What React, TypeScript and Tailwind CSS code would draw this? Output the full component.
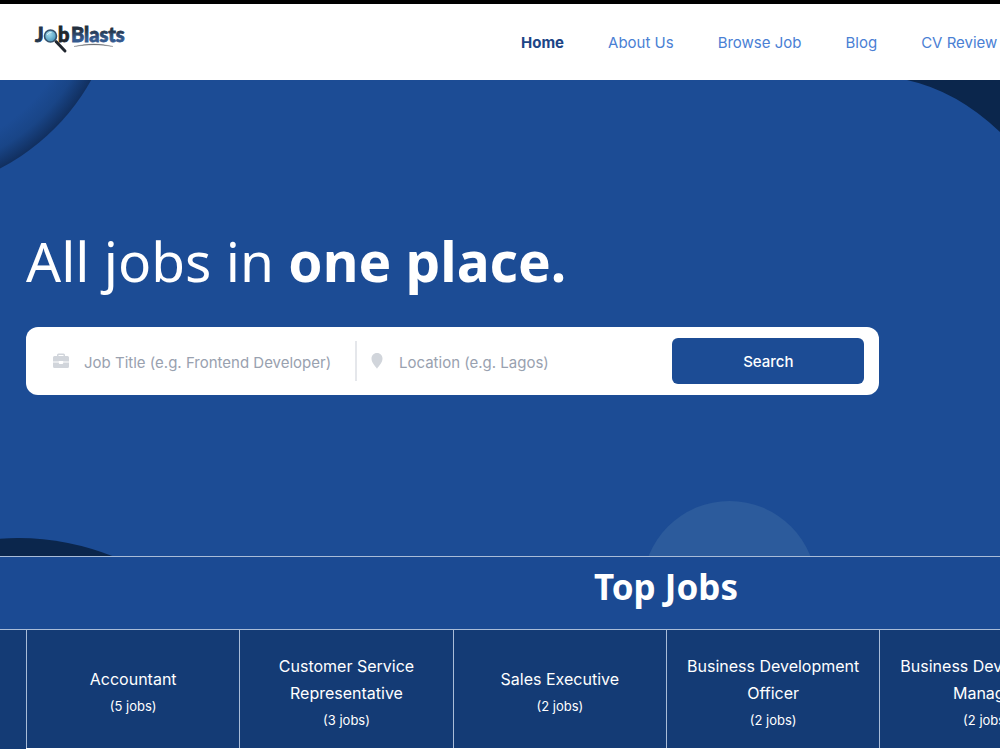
import { useState } from "react";

type NavLink = { label: string; href: string; active?: boolean };

type JobCategory = { title: string; count: number };

const navLinks: NavLink[] = [
  { label: "Home", href: "#home", active: true },
  { label: "About Us", href: "#about" },
  { label: "Browse Job", href: "#jobs" },
  { label: "Blog", href: "#blog" },
  { label: "CV Review", href: "#cv-review" },
];

const topJobs: JobCategory[] = [
  { title: "Accountant", count: 5 },
  { title: "Customer Service Representative", count: 3 },
  { title: "Sales Executive", count: 2 },
  { title: "Business Development Officer", count: 2 },
  { title: "Business Development Manager", count: 2 },
];

function Logo() {
  return (
    <svg width="96" height="44" viewBox="0 -4 96 44" role="img" aria-label="JobBlasts">
      <defs>
        <linearGradient id="letters" x1="0" y1="0" x2="0" y2="1">
          <stop offset="0.3" stopColor="#24303f" />
          <stop offset="0.7" stopColor="#34598e" />
        </linearGradient>
        <radialGradient id="lens" cx="0.4" cy="0.35" r="0.7">
          <stop offset="0" stopColor="#a5dcee" />
          <stop offset="1" stopColor="#4292b8" />
        </radialGradient>
      </defs>
      <g fontFamily="Lato, sans-serif" fontWeight="900" fontSize="20" strokeWidth="0.8">
        <text x="1" y="18" fill="#25364b" stroke="#25364b">J</text>
        <text x="24" y="18" fill="#20262e" stroke="#20262e">b</text>
        <text x="37" y="18" fill="url(#letters)" stroke="url(#letters)">Blasts</text>
      </g>
      <path d="M22 17.500 L31 27" stroke="#20262e" strokeWidth="3" strokeLinecap="round" />
      <circle cx="16.500" cy="12" r="6" fill="url(#lens)" stroke="#35526e" strokeWidth="1.6" />
      <path d="M13 11 Q14.500 8 17.500 8.500" stroke="#ffffff" strokeOpacity="0.7" fill="none" />
      <path d="M40 22.500 Q60 17.500 79 22.500 Q60 19 40 22.500Z" fill="#4d5359" stroke="#4d5359" strokeWidth="0.3" />
    </svg>
  );
}

function BriefcaseIcon() {
  return (
    <svg width="16" height="16" viewBox="0 0 16 16" className="shrink-0" aria-hidden="true">
      <path
        fill="#d1d5db"
        fillRule="evenodd"
        d="M4 3V2Q4 .5 5.500 .5H10.500Q12 .5 12 2V3H14.500Q16 3 16 4.500V8.500H10.200V8H5.800V8.500H0V4.500Q0 3 1.500 3ZM5.500 3H10.500V2H5.500Z"
      />
      <path
        fill="#d1d5db"
        d="M0 9.500H5.800V10Q5.800 11 6.800 11H9.200Q10.200 11 10.200 10V9.500H16V13.500Q16 15 14.500 15H1.500Q0 15 0 13.500Z"
      />
    </svg>
  );
}

function PinIcon() {
  return (
    <svg width="12" height="16" viewBox="0 0 12 16" className="shrink-0" aria-hidden="true">
      <path
        fill="#d1d5db"
        d="M6 0C2.600 0 .5 2.500 .5 5.600C.5 9.600 4 13 6 15.700C8 13 11.500 9.600 11.500 5.600C11.500 2.500 9.400 0 6 0Z"
      />
    </svg>
  );
}

function HeroShapes() {
  return (
    <svg
      className="absolute inset-0 h-full w-full"
      viewBox="0 0 1332 476"
      preserveAspectRatio="xMinYMin slice"
      aria-hidden="true"
    >
      <defs>
        <radialGradient id="rim">
          <stop offset="0.84" stopColor="#1c4c95" />
          <stop offset="0.92" stopColor="#194587" />
          <stop offset="1" stopColor="#112f5f" />
        </radialGradient>
      </defs>
      <circle cx="-101" cy="-107" r="220" fill="url(#rim)" />
      <path d="M907 0Q957 11 1000 52Q1040 90 1060 176H1332V0Z" fill="#0b264c" />
      <circle cx="18" cy="714" r="256" fill="#0b264c" />
      <circle cx="729.5" cy="508" r="87" fill="#2c5b9c" />
    </svg>
  );
}

function SearchForm() {
  const [title, setTitle] = useState("");
  const [location, setLocation] = useState("");

  return (
    <form
      onSubmit={(e) => e.preventDefault()}
      className="mt-8 flex h-[68px] w-2/3 items-center rounded-xl bg-white pr-[15px] pl-[27px]"
    >
      <label className="flex w-[304px] items-center gap-[15px] border-r-2 border-gray-200 py-2">
        <BriefcaseIcon />
        <input
          value={title}
          onChange={(e) => setTitle(e.target.value)}
          aria-label="Job title"
          placeholder="Job Title (e.g. Frontend Developer)"
          className="h-6 min-w-0 flex-1 pt-[2px] text-[15px] text-gray-700 outline-none placeholder:text-gray-400"
        />
      </label>
      <label className="flex flex-1 items-center gap-4 py-2 pl-[14px]">
        <PinIcon />
        <input
          value={location}
          onChange={(e) => setLocation(e.target.value)}
          aria-label="Location"
          placeholder="Location (e.g. Lagos)"
          className="h-6 min-w-0 flex-1 pt-[2px] text-[15px] text-gray-700 outline-none placeholder:text-gray-400"
        />
      </label>
      <button
        type="submit"
        className="h-[46px] w-48 rounded-md bg-[#1c4c95] pt-[2px] text-[15px] font-medium text-white"
      >
        Search
      </button>
    </form>
  );
}

export default function App() {
  return (
    <div className="overflow-x-hidden bg-white font-['Inter',sans-serif]">
      <div className="min-w-[1332px]">
        <header className="border-t-4 border-black bg-white">
          <div className="mx-auto flex h-[76px] max-w-7xl items-center pl-2">
            <a href="#home" className="w-[487px] shrink-0">
              <Logo />
            </a>
            <nav className="flex gap-11 pt-[2px] text-[15px]">
              {navLinks.map((link) => (
                <a
                  key={link.label}
                  href={link.href}
                  className={
                    link.active
                      ? "font-bold whitespace-nowrap text-[#1c4586]"
                      : "whitespace-nowrap text-[#4a80d4]"
                  }
                >
                  {link.label}
                </a>
              ))}
            </nav>
          </div>
        </header>

        <section className="relative h-[476px] bg-[#1c4c95]">
          <HeroShapes />
          <div className="relative mx-auto max-w-7xl pt-[147px]">
            <h1 className="font-['Noto_Sans',sans-serif] text-[55px] leading-[68px] text-white">
              All jobs in <strong className="font-bold">one place.</strong>
            </h1>
            <SearchForm />
          </div>
        </section>

        <section className="bg-[#143b75] text-white">
          <h2 className="h-[74px] border-y border-[#a9bcd8] bg-[#1b4a93] pt-[7px] text-center font-['Noto_Sans',sans-serif] text-[35px] leading-[46px] font-bold">
            Top Jobs
          </h2>
          <ul className="mx-auto grid max-w-7xl grid-cols-6 border-b border-white">
            {topJobs.map((job) => (
              <li key={job.title} className="border-l border-[#a9bcd8]">
                <a
                  href="#jobs"
                  className="flex h-[118px] flex-col items-center justify-center px-3 pt-2 text-center text-base leading-[27px]"
                >
                  {job.title}
                  <span className="text-[13px]">({job.count} jobs)</span>
                </a>
              </li>
            ))}
          </ul>
        </section>
      </div>
    </div>
  );
}
